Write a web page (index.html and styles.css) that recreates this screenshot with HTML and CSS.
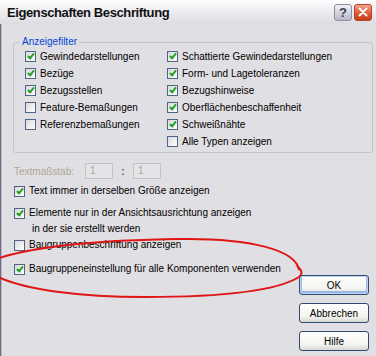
FILE: index.html
```html
<!DOCTYPE html>
<html>
<head>
    <title>Eigenschaften Beschriftung</title>
    <link rel="stylesheet" href="styles.css">
</head>
<body>

    <div class="window">
        <div class="titlebar">
            <span class="title">Eigenschaften Beschriftung</span>
            <div class="caption-btns">
                <span class="cap-btn help">?</span>
                <span class="cap-btn close">
                    <svg width="10" height="10" viewBox="0 0 10 10"><path d="M1.5 1.5 L8.5 8.5 M8.5 1.5 L1.5 8.5" stroke="#fff" stroke-width="2" stroke-linecap="round"/></svg>
                </span>
            </div>
        </div>

        <div class="content">
            <fieldset class="group">
                <legend>Anzeigefilter</legend>
                <div class="filter-grid">
                    <div class="col first">
                        <label class="check"><span class="box on"></span>Gewindedarstellungen</label>
                        <label class="check"><span class="box on"></span>Bezüge</label>
                        <label class="check"><span class="box on"></span>Bezugsstellen</label>
                        <label class="check"><span class="box"></span>Feature-Bemaßungen</label>
                        <label class="check"><span class="box"></span>Referenzbemaßungen</label>
                    </div>
                    <div class="col">
                        <label class="check"><span class="box on"></span>Schattierte Gewindedarstellungen</label>
                        <label class="check"><span class="box on"></span>Form- und Lagetoleranzen</label>
                        <label class="check"><span class="box on"></span>Bezugshinweise</label>
                        <label class="check"><span class="box on"></span>Oberflächenbeschaffenheit</label>
                        <label class="check"><span class="box on"></span>Schweißnähte</label>
                        <label class="check"><span class="box"></span>Alle Typen anzeigen</label>
                    </div>
                </div>
            </fieldset>

            <div class="scale-row">
                <span class="scale-label">Textmaßstab:</span>
                <span class="field">1</span>
                <span class="colon">:</span>
                <span class="field">1</span>
            </div>

            <div class="options">
                <label class="opt"><span class="box on"></span>Text immer in derselben Größe anzeigen</label>
                <label class="opt spaced"><span class="box on"></span><span>Elemente nur in der Ansichtsausrichtung anzeigen<span class="second-line">in der sie erstellt werden</span></span></label>
                <label class="opt"><span class="box"></span>Baugruppenbeschriftung anzeigen</label>
                <label class="opt spaced-lg"><span class="box on"></span>Baugruppeneinstellung für alle Komponenten verwenden</label>
            </div>

            <div class="buttons">
                <button class="btn default" type="button">OK</button>
                <button class="btn" type="button">Abbrechen</button>
                <button class="btn" type="button">Hilfe</button>
            </div>
        </div>

        <svg class="markup" width="376" height="356" viewBox="0 0 376 356">
            <path d="M299 270 C296 250, 250 238, 180 239 C110 240, 40 244, -4 259" fill="none" stroke="#e01515" stroke-width="2"/>
            <path d="M-4 276 C25 290, 80 297, 145 297 C215 297, 275 292, 299 277 C303 274, 302 270, 297 266" fill="none" stroke="#e01515" stroke-width="2"/>
        </svg>
    </div>

</body>
</html>
```

FILE: styles.css
```css
body {
    margin: 0;
    font-family: "Liberation Sans", Arial, sans-serif;
    font-size: 10px;
    color: #000;
    background-color: #e0dfe3;
}

.window {
    position: relative;
    width: 376px;
    height: 356px;
    overflow: hidden;
    background: #e0dfe3;
}

.titlebar {
    height: 24px;
    box-sizing: border-box;
    display: flex;
    align-items: center;
    justify-content: space-between;
    padding: 0 4px 0 7px;
    background: linear-gradient(180deg, #fdfdfe 0%, #eeeef2 45%, #dcdce3 100%);
}

.title {
    font-size: 13px;
    font-weight: bold;
    letter-spacing: -0.4px;
    color: #111;
}

.caption-btns {
    display: flex;
    gap: 2px;
}

.cap-btn {
    width: 18px;
    height: 17px;
    box-sizing: border-box;
    border-radius: 3px;
    display: flex;
    align-items: center;
    justify-content: center;
}

.help {
    background: linear-gradient(180deg, #f1f1f5, #b9b9c8);
    border: 1px solid #8d8ea2;
    color: #3c3d4e;
    font-size: 13px;
    font-weight: bold;
}

.close {
    background: linear-gradient(180deg, #f3a48c, #dc5a36 55%, #c43c1c);
    border: 1px solid #b34126;
}

.content {
    height: 332px;
    box-sizing: border-box;
    border-left: 1px solid #6e6e80;
    box-shadow: inset 1px 0 #b9b9c6;
    padding: 12px 3px 0 12px;
    display: flex;
    flex-direction: column;
}

.group {
    margin: 0;
    padding: 0 0 2px 0;
    min-width: 0;
    border: 1px solid #c5c4cc;
    border-radius: 3px;
}

.group legend {
    margin-left: 6px;
    padding: 0 2px;
    line-height: 12px;
    color: #0046d5;
}

.filter-grid {
    display: flex;
    padding-left: 11px;
}

.col {
    display: flex;
    flex-direction: column;
}

.col.first {
    width: 142px;
}

.check {
    display: flex;
    align-items: center;
    gap: 4px;
    height: 17px;
    white-space: nowrap;
}

.box {
    position: relative;
    flex: none;
    width: 11px;
    height: 11px;
    box-sizing: border-box;
    border: 1px solid #4f6588;
    background: linear-gradient(135deg, #d9d9de, #ffffff);
}

.box.on::after {
    content: "";
    position: absolute;
    left: 3px;
    top: 0;
    width: 2px;
    height: 5px;
    border: solid #21a121;
    border-width: 0 2px 2px 0;
    transform: rotate(40deg);
}

.scale-row {
    display: flex;
    align-items: center;
    height: 16px;
    margin-top: 10px;
    padding-left: 1px;
    color: #aca899;
}

.scale-label {
    width: 71px;
}

.field {
    width: 28px;
    height: 16px;
    box-sizing: border-box;
    border: 1px solid #c4c3bd;
    padding-left: 4px;
    line-height: 14px;
    background: #e4e3e7;
}

.colon {
    width: 4px;
    margin: 0 8px;
    text-align: center;
    font-weight: bold;
    color: #5a5a5a;
}

.options {
    display: flex;
    flex-direction: column;
    margin-top: 4px;
    padding-left: 1px;
}

.opt {
    display: flex;
    align-items: flex-start;
    gap: 4px;
    line-height: 16px;
    white-space: nowrap;
}

.opt .box {
    margin-top: 3px;
}

.opt.spaced {
    margin-top: 6px;
}

.opt.spaced-lg {
    margin-top: 8px;
}

.second-line {
    display: block;
    padding-left: 3px;
}

.buttons {
    align-self: flex-end;
    display: flex;
    flex-direction: column;
    gap: 8px;
    margin: -2px 4px 0 0;
}

.btn {
    width: 70px;
    height: 20px;
    box-sizing: border-box;
    padding: 0;
    font: inherit;
    color: #000;
    border: 1px solid #2f4a74;
    border-radius: 3px;
    background: linear-gradient(180deg, #ffffff 0%, #f3f3f0 70%, #d8d6ce 100%);
}

.btn.default {
    box-shadow: inset 0 0 0 1px #c0d4f4, inset 0 -1px 0 2px #9ab6e6;
}

.markup {
    position: absolute;
    top: 0;
    left: 0;
    pointer-events: none;
}
```
